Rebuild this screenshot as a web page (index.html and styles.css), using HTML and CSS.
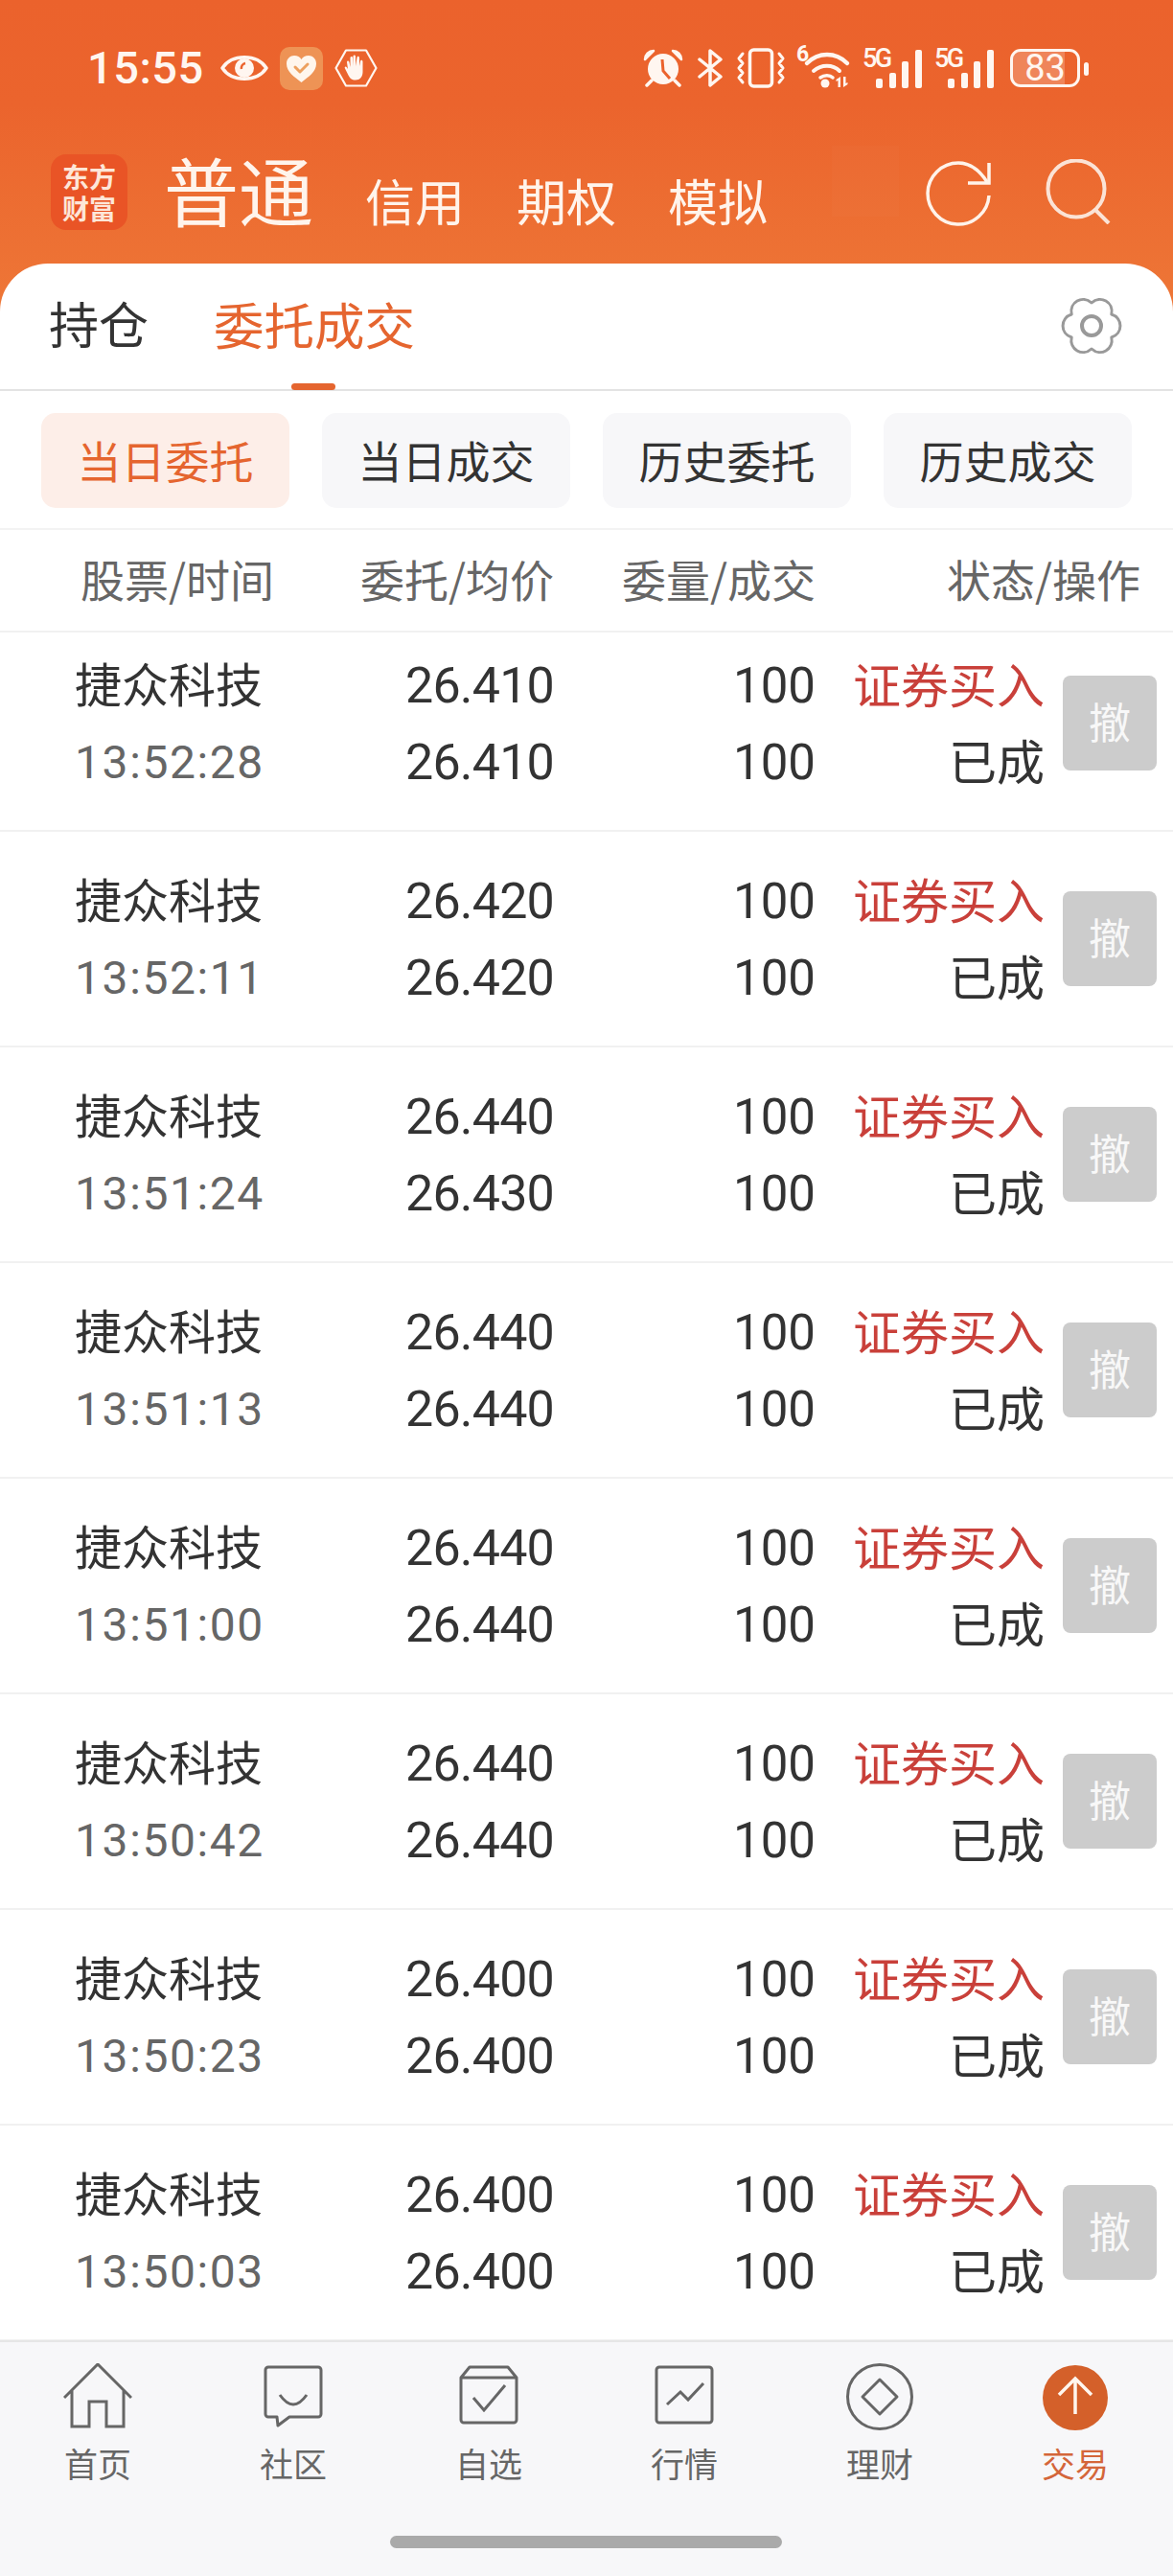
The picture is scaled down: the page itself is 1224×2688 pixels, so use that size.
FILE: index.html
```html
<!DOCTYPE html>
<html lang="zh-CN">
<head>
    <meta charset="UTF-8">
    <title>委托成交</title>
    <link rel="stylesheet" href="styles.css">
</head>
<body>
<div class="app">

    <!-- 状态栏 -->
    <div class="status-bar">
        <span class="clock">15:55</span>
        <svg class="ic-eye" viewBox="0 0 50 32">
            <path d="M2 16C12 1 38 1 48 16 38 31 12 31 2 16z" fill="none" stroke="#fff6f0" stroke-width="3.500" stroke-linejoin="round"/>
            <circle cx="25" cy="16" r="10" fill="#fff6f0"/>
            <path d="M22 17a5 5 0 0 1 4-6" fill="none" stroke="#eb622c" stroke-width="2.500"/>
        </svg>
        <svg class="ic-heart" viewBox="0 0 45 45">
            <rect width="45" height="45" rx="10" fill="#ee9355"/>
            <path d="M22.500 37C15 31 7 26 7 17.500C7 12 11 9 15 9c3.500 0 6 1.500 7.500 4C24 10.500 26.500 9 30 9c4 0 8 3 8 8.500C38 26 30 31 22.500 37z" fill="#fff6ec"/>
            <path d="M16 21l5 5 8-8" fill="none" stroke="#eda15f" stroke-width="3" stroke-linecap="round" stroke-linejoin="round"/>
        </svg>
        <svg class="ic-hand" viewBox="0 0 45 40">
            <path d="M12 1.500h21L43.500 20 33 38.500H12L1.500 20z" fill="none" stroke="#fff6f0" stroke-width="2.200" stroke-linejoin="round"/>
            <path d="M14 21l-1-7c0-2 2-2 2.500 0l1 5V9.500c0-2 2.500-2 2.500 0V18l.5-10c0-2 2.500-2 2.500 0v10l1.500-9c.5-2 2.500-1.500 2.500.5V18l1-5c.5-2 2.500-1.500 2.500.5V24c0 5-3 8.500-7.500 8.500-4 0-6-2-7.500-5l-3.500-7c-1-2 1-3 2-1z" fill="#fff6f0"/>
        </svg>

        <div class="status-right">
            <svg class="ic-alarm" viewBox="0 0 42 40">
                <circle cx="21" cy="21" r="16" fill="#fff6f0"/>
                <path d="M2 11c0-5 4-9 9-9zM40 11c0-5-4-9-9-9z" fill="#fff6f0" stroke="#fff6f0" stroke-width="2.500" stroke-linejoin="round"/>
                <path d="M9 33l-5 5M33 33l5 5" stroke="#fff6f0" stroke-width="3.500" stroke-linecap="round"/>
                <path d="M20 11l1 12 7 8" fill="none" stroke="#eb622c" stroke-width="3"/>
            </svg>
            <svg class="ic-bt" viewBox="0 0 27 40">
                <path d="M2 11l22 18-11 9V2l11 9L2 29" fill="none" stroke="#fff6f0" stroke-width="3.500" stroke-linejoin="round" stroke-linecap="round"/>
            </svg>
            <svg class="ic-vibrate" viewBox="0 0 50 42">
                <rect x="13.500" y="2" width="23" height="38" rx="4" fill="none" stroke="#fff6f0" stroke-width="3.500"/>
                <path d="M6 6l-4 5 4 5-4 5 4 5-4 5 4 5M44 6l4 5-4 5 4 5-4 5 4 5-4 5" fill="none" stroke="#fff6f0" stroke-width="3" stroke-linejoin="round" stroke-linecap="round"/>
            </svg>
            <span class="ic-wifi">
                <span class="wifi-gen">6</span>
                <svg viewBox="0 0 58 42">
                    <path d="M11 16C23 4 41 4 53 16" fill="none" stroke="#fff6f0" stroke-width="4.500" stroke-linecap="round"/>
                    <path d="M18 24c8-7 20-7 27 0" fill="none" stroke="#fff6f0" stroke-width="4" stroke-linecap="round"/>
                    <path d="M25 31c4-3 10-3 13 0" fill="none" stroke="#fff6f0" stroke-width="3.500" stroke-linecap="round"/>
                    <circle cx="30" cy="37" r="4.500" fill="#fff6f0"/>
                    <path d="M46 30v11h-2.500v-7l-2 1v-2zM49 30h2.500v7l2-1v2l-4.500 3z" fill="#fff6f0"/>
                </svg>
            </span>
            <span class="ic-signal">
                <span class="signal-type">5G</span>
                <svg viewBox="0 0 48 42">
                    <rect x="0" y="32" width="7" height="10" rx="2" fill="#fff6f0"/>
                    <rect x="14" y="26" width="7" height="16" rx="2" fill="#fff6f0"/>
                    <rect x="27" y="14" width="7" height="28" rx="2" fill="#fff6f0"/>
                    <rect x="41" y="2" width="7" height="40" rx="2" fill="#fff6f0"/>
                </svg>
            </span>
            <span class="ic-signal">
                <span class="signal-type">5G</span>
                <svg viewBox="0 0 48 42">
                    <rect x="0" y="32" width="7" height="10" rx="2" fill="#fff6f0"/>
                    <rect x="14" y="26" width="7" height="16" rx="2" fill="#fff6f0"/>
                    <rect x="27" y="14" width="7" height="28" rx="2" fill="#fff6f0"/>
                    <rect x="41" y="2" width="7" height="40" rx="2" fill="#fff6f0"/>
                </svg>
            </span>
            <span class="battery"><span class="battery-level">83</span></span>
        </div>
    </div>

    <!-- 账户类型导航 -->
    <div class="nav">
        <div class="logo"><span>东方</span><span>财富</span></div>
        <div class="nav-tabs">
            <span class="nav-tab current">普通</span>
            <span class="nav-tab">信用</span>
            <span class="nav-tab">期权</span>
            <span class="nav-tab">模拟</span>
        </div>
        <div class="nav-fade"></div>
        <div class="nav-tools">
            <svg class="ic-refresh" viewBox="0 0 68 68">
                <path d="M66 36A32 32 0 1 1 34 2c11 0 21 6 30 20" fill="none" stroke="#fff3ea" stroke-width="3.500"/>
                <path d="M66 2V23H44" fill="none" stroke="#fff3ea" stroke-width="3.500"/>
            </svg>
            <svg class="ic-search" viewBox="0 0 68 68">
                <circle cx="32" cy="31" r="29.500" fill="none" stroke="#fbe3d6" stroke-width="4"/>
                <path d="M51 52l15 15" stroke="#fbe3d6" stroke-width="4"/>
            </svg>
        </div>
    </div>

    <!-- 内容卡片 -->
    <div class="card">
        <div class="tabs">
            <span class="tab">持仓</span>
            <span class="tab active">委托成交</span>
            <svg class="ic-gear" viewBox="-2 -2 64 62">
                <path d="M30 5C39.400 -3.700 53.600 4.500 50.800 17 63 20.800 63 37.200 50.800 41 53.600 53.500 39.400 61.700 30 53 20.600 61.700 6.400 53.500 9.200 41 -3 37.200 -3 20.800 9.200 17 6.400 4.500 20.600 -3.700 30 5z" fill="none" stroke="#999" stroke-width="3" stroke-linejoin="round"/>
                <circle cx="30" cy="29" r="10" fill="none" stroke="#999" stroke-width="4"/>
            </svg>
        </div>

        <div class="filters">
            <span class="filter selected">当日委托</span>
            <span class="filter">当日成交</span>
            <span class="filter">历史委托</span>
            <span class="filter">历史成交</span>
        </div>

        <div class="table-head">
            <span class="th-name">股票/时间</span>
            <span class="th-price">委托/均价</span>
            <span class="th-qty">委量/成交</span>
            <span class="th-state">状态/操作</span>
        </div>

        <div class="orders">
            <div class="order">
                <div class="cell cell-name"><span>捷众科技</span><span class="time">13:52:28</span></div>
                <div class="cell num price"><span>26.410</span><span>26.410</span></div>
                <div class="cell num"><span>100</span><span>100</span></div>
                <div class="cell cell-state"><span class="buy">证券买入</span><span>已成</span></div>
                <span class="revoke">撤</span>
            </div>
            <div class="order">
                <div class="cell cell-name"><span>捷众科技</span><span class="time">13:52:11</span></div>
                <div class="cell num price"><span>26.420</span><span>26.420</span></div>
                <div class="cell num"><span>100</span><span>100</span></div>
                <div class="cell cell-state"><span class="buy">证券买入</span><span>已成</span></div>
                <span class="revoke">撤</span>
            </div>
            <div class="order">
                <div class="cell cell-name"><span>捷众科技</span><span class="time">13:51:24</span></div>
                <div class="cell num price"><span>26.440</span><span>26.430</span></div>
                <div class="cell num"><span>100</span><span>100</span></div>
                <div class="cell cell-state"><span class="buy">证券买入</span><span>已成</span></div>
                <span class="revoke">撤</span>
            </div>
            <div class="order">
                <div class="cell cell-name"><span>捷众科技</span><span class="time">13:51:13</span></div>
                <div class="cell num price"><span>26.440</span><span>26.440</span></div>
                <div class="cell num"><span>100</span><span>100</span></div>
                <div class="cell cell-state"><span class="buy">证券买入</span><span>已成</span></div>
                <span class="revoke">撤</span>
            </div>
            <div class="order">
                <div class="cell cell-name"><span>捷众科技</span><span class="time">13:51:00</span></div>
                <div class="cell num price"><span>26.440</span><span>26.440</span></div>
                <div class="cell num"><span>100</span><span>100</span></div>
                <div class="cell cell-state"><span class="buy">证券买入</span><span>已成</span></div>
                <span class="revoke">撤</span>
            </div>
            <div class="order">
                <div class="cell cell-name"><span>捷众科技</span><span class="time">13:50:42</span></div>
                <div class="cell num price"><span>26.440</span><span>26.440</span></div>
                <div class="cell num"><span>100</span><span>100</span></div>
                <div class="cell cell-state"><span class="buy">证券买入</span><span>已成</span></div>
                <span class="revoke">撤</span>
            </div>
            <div class="order">
                <div class="cell cell-name"><span>捷众科技</span><span class="time">13:50:23</span></div>
                <div class="cell num price"><span>26.400</span><span>26.400</span></div>
                <div class="cell num"><span>100</span><span>100</span></div>
                <div class="cell cell-state"><span class="buy">证券买入</span><span>已成</span></div>
                <span class="revoke">撤</span>
            </div>
            <div class="order">
                <div class="cell cell-name"><span>捷众科技</span><span class="time">13:50:03</span></div>
                <div class="cell num price"><span>26.400</span><span>26.400</span></div>
                <div class="cell num"><span>100</span><span>100</span></div>
                <div class="cell cell-state"><span class="buy">证券买入</span><span>已成</span></div>
                <span class="revoke">撤</span>
            </div>
        </div>
    </div>

    <!-- 底部标签栏 -->
    <div class="tabbar">
        <div class="tabbar-items">
            <div class="tabbar-item">
                <svg viewBox="0 0 72 70"><path d="M1 36L36 1l35 35M9 28v38h18V40h18v26h18V28" fill="none" stroke="#666" stroke-width="3"/></svg>
                <span>首页</span>
            </div>
            <div class="tabbar-item">
                <svg viewBox="0 0 72 70"><path d="M10 4h52a3 3 0 0 1 3 3v46a3 3 0 0 1-3 3H32L20 65l-1-9h-9a3 3 0 0 1-3-3V7a3 3 0 0 1 3-3z" fill="none" stroke="#666" stroke-width="3" stroke-linejoin="round"/><path d="M22 33Q36 53 50 33" fill="none" stroke="#666" stroke-width="3"/></svg>
                <span>社区</span>
            </div>
            <div class="tabbar-item">
                <svg viewBox="0 0 72 70"><path d="M7 15L16 4h40l9 11v44a3 3 0 0 1-3 3H10a3 3 0 0 1-3-3zM7 15h58" fill="none" stroke="#666" stroke-width="3" stroke-linejoin="round"/><path d="M20 36l11 13 22-26" fill="none" stroke="#666" stroke-width="3"/></svg>
                <span>自选</span>
            </div>
            <div class="tabbar-item">
                <svg viewBox="0 0 72 70"><rect x="7" y="4" width="58" height="58" rx="3" fill="none" stroke="#666" stroke-width="3"/><path d="M18 43l14-13 8 8 16-17" fill="none" stroke="#666" stroke-width="3"/></svg>
                <span>行情</span>
            </div>
            <div class="tabbar-item">
                <svg viewBox="0 0 72 70"><circle cx="36" cy="35" r="33.500" fill="none" stroke="#666" stroke-width="3"/><path d="M36 17l18 18-18 18-18-18z" fill="none" stroke="#666" stroke-width="3" stroke-linejoin="round"/></svg>
                <span>理财</span>
            </div>
            <div class="tabbar-item on">
                <svg viewBox="0 0 72 70"><circle cx="36" cy="36" r="34" fill="#d4602a"/><path d="M19 33l17-17 17 17M36 16v37" fill="none" stroke="#fff6ee" stroke-width="3.500"/></svg>
                <span>交易</span>
            </div>
        </div>
        <div class="home-bar"></div>
    </div>
</div>
</body>
</html>
```

FILE: styles.css
```css
/* === 기본 === */
html, body {
    margin: 0;
    width: 1224px;
    height: 2688px;
    overflow: hidden;
    background: #fff;
    font-family: "Noto Sans CJK SC", "Noto Sans", sans-serif;
    color: #333;
}

.app {
    width: 1224px;
    height: 2688px;
    display: flex;
    flex-direction: column;
    background: linear-gradient(#eb622c 0, #eb642d 110px, #ee7737 330px) no-repeat;
    background-size: 100% 330px;
}

/* === 상태바 === */
.status-bar {
    height: 110px;
    flex: none;
    display: flex;
    align-items: center;
    padding: 32px 97px 0 91px;
    box-sizing: border-box;
    color: #fff6f0;
}

.clock {
    font-family: Roboto, sans-serif;
    font-weight: 500;
    font-size: 47px;
    line-height: 46px;
    letter-spacing: 0.500px;
    margin-right: 17px;
}

.ic-eye { width: 50px; height: 32px; margin-right: 12px; }
.ic-heart { width: 45px; height: 45px; margin-right: 12px; }
.ic-hand { width: 45px; height: 40px; }

.status-right {
    margin-left: auto;
    display: flex;
    align-items: center;
}

.ic-alarm { width: 42px; height: 40px; margin-right: 15px; }
.ic-bt { width: 27px; height: 40px; margin-right: 14px; }
.ic-vibrate { width: 50px; height: 42px; margin-right: 12px; }

.ic-wifi {
    position: relative;
    width: 58px;
    height: 42px;
    margin-right: 11px;
    display: block;
}
.ic-wifi svg { width: 58px; height: 42px; display: block; }
.wifi-gen {
    position: absolute;
    left: 0;
    top: -6px;
    font: bold 23px/26px Roboto, sans-serif;
    color: #fff6f0;
}

.ic-signal {
    position: relative;
    width: 62px;
    height: 42px;
    margin-right: 13px;
    display: block;
}
.ic-signal svg {
    position: absolute;
    right: 0;
    bottom: 0;
    width: 48px;
    height: 42px;
}
.signal-type {
    position: absolute;
    left: 0;
    top: -3px;
    font: 500 27px/28px Roboto, sans-serif;
    letter-spacing: -2.500px;
    color: #fff6f0;
    z-index: 1;
}

.battery {
    position: relative;
    width: 73px;
    height: 40px;
    box-sizing: border-box;
    margin-left: 4px;
    border: 3px solid #fff6f0;
    border-radius: 11px;
    background: linear-gradient(90deg, #ef855a 0, #ef855a 80%, transparent 80%);
    background-clip: padding-box;
    display: flex;
    align-items: center;
    justify-content: center;
}
.battery::after {
    content: "";
    position: absolute;
    right: -12px;
    top: 11px;
    width: 5px;
    height: 14px;
    border-radius: 3px;
    background: #fff6f0;
}
.battery-level {
    font: 38px/34px Roboto, sans-serif;
    color: #fff6f0;
}

/* === 导航 === */
.nav {
    position: relative;
    height: 165px;
    flex: none;
    display: flex;
    padding: 51px 65px 0 53px;
    box-sizing: border-box;
    color: #fff;
}

.logo {
    width: 80px;
    height: 79px;
    box-sizing: border-box;
    padding-top: 7px;
    border-radius: 16px;
    background: #e95426;
    font-size: 28px;
    line-height: 33px;
    font-weight: bold;
    text-align: center;
    color: #fde6d8;
}
.logo span { display: block; }

.nav-tabs {
    display: flex;
    align-items: baseline;
    gap: 54px;
    margin: -3px 0 0 38px;
    height: 79px;
}

.nav-tab {
    font-size: 52px;
    line-height: 79px;
    color: #fff4ec;
}
.nav-tab.current {
    font-size: 78px;
}

/* 滚出去的标签留下的淡影 */
.nav-fade {
    position: absolute;
    left: 868px;
    top: 42px;
    width: 70px;
    height: 74px;
    background: rgba(255, 255, 255, 0.015);
}

.nav-tools {
    margin-left: auto;
    display: flex;
    gap: 57px;
    align-items: flex-start;
}
.ic-refresh { width: 68px; height: 68px; margin-top: 7px; }
.ic-search { width: 68px; height: 68px; margin-top: 5px; }

/* === 卡片 === */
.card {
    flex: 1;
    min-height: 0;
    display: flex;
    flex-direction: column;
    background: #fff;
    border-radius: 50px 50px 0 0;
}

.tabs {
    position: relative;
    height: 133px;
    flex: none;
    box-sizing: border-box;
    display: flex;
    align-items: flex-start;
    gap: 68px;
    padding: 27px 55px 0 51px;
    border-bottom: 2px solid #e3e3e3;
}

.tab {
    font-size: 52px;
    line-height: 70px;
    color: #333;
}
.tab.active {
    position: relative;
    font-size: 52.500px;
    color: #e5652f;
}
.tab.active::after {
    content: "";
    position: absolute;
    left: 81px;
    top: 98px;
    width: 46px;
    height: 7px;
    border-radius: 4px;
    background: #e5652f;
}

.ic-gear {
    width: 64px;
    height: 62px;
    margin: 7px -2px 0 auto;
}

.filters {
    height: 145px;
    flex: none;
    box-sizing: border-box;
    display: flex;
    gap: 34px;
    padding: 23px 0 0 43px;
    border-bottom: 2px solid #f3f3f3;
}

.filter {
    width: 259px;
    height: 99px;
    border-radius: 15px;
    background: #f7f7f9;
    font-size: 46px;
    line-height: 97px;
    text-align: center;
    color: #333;
}
.filter.selected {
    background: #fdeee8;
    color: #e5652f;
}

.table-head {
    height: 107px;
    flex: none;
    box-sizing: border-box;
    display: flex;
    align-items: center;
    font-size: 46px;
    color: #666;
    border-bottom: 2px solid #f1f1f1;
    padding: 0 34px 5px 84px;
}
.table-head span { text-align: right; white-space: nowrap; }
.table-head .th-name { width: 200px; text-align: left; }
.th-price { width: 294px; }
.th-qty { width: 273px; }
.th-state { width: 339px; }

.orders {
    flex: 1;
    min-height: 0;
    overflow: hidden;
}

.order {
    height: 225px;
    box-sizing: border-box;
    display: grid;
    grid-template-columns: 221px 280px 272px 239px 117px;
    align-items: center;
    padding-left: 78px;
    border-bottom: 2px solid #f1f1f1;
}
/* 第一行被滚上去一截 */
.order:first-child { margin-top: -17px; }

.cell {
    display: flex;
    flex-direction: column;
    align-items: flex-end;
    font-size: 50px;
    line-height: 80px;
    color: #333;
}
.cell-name { align-items: flex-start; font-size: 49px; }
.cell-name span:first-child,
.cell-state span { transform: translateY(-3px); }

.num { font-family: Roboto, sans-serif; font-size: 51px; padding-top: 2px; }
.price { font-size: 52px; letter-spacing: -0.800px; }
.price span { margin-right: 1px; }

.cell-name .time {
    font-family: Roboto, sans-serif;
    font-size: 48px;
    letter-spacing: 1.600px;
    color: #666;
    transform: translateY(1px);
}
.buy { color: #c9403a; }

.revoke {
    justify-self: end;
    width: 98px;
    height: 99px;
    border-radius: 8px;
    background: #ccc;
    color: #f8f8f8;
    font-size: 44px;
    line-height: 94px;
    text-align: center;
}

/* === 底部 === */
.tabbar {
    height: 246px;
    flex: none;
    box-sizing: border-box;
    background: #f7f7f9;
    border-top: 2px solid #e6e6e6;
}

.tabbar-items {
    display: grid;
    grid-template-columns: repeat(6, 204px);
    padding-top: 22px;
}

.tabbar-item {
    display: flex;
    flex-direction: column;
    align-items: center;
    font-size: 35px;
    line-height: 40px;
    color: #666;
}
.tabbar-item svg {
    width: 72px;
    height: 70px;
    margin-bottom: 14px;
}
.tabbar-item.on { color: #d4663a; }

.home-bar {
    width: 409px;
    height: 13px;
    border-radius: 7px;
    background: #aaa;
    margin: 56px 0 0 407px;
}
```
